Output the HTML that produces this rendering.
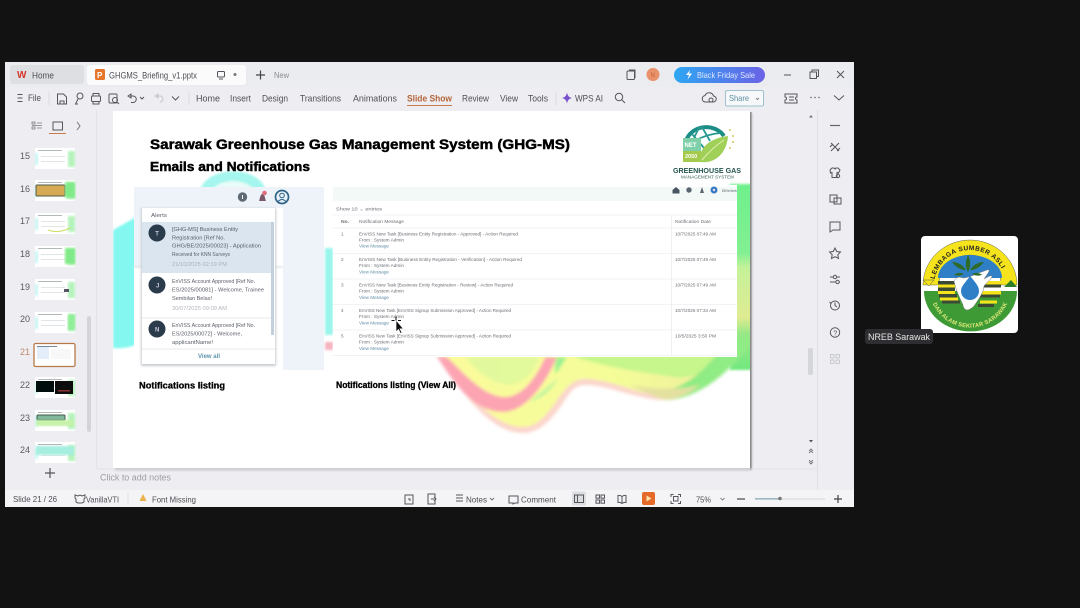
<!DOCTYPE html>
<html><head><meta charset="utf-8"><style>
html,body{margin:0;padding:0;background:#121212;width:1080px;height:608px;overflow:hidden}
svg{display:block}
text{font-family:"Liberation Sans",sans-serif}
.ui{font-size:9.5px;fill:#4e4f55}
.ic{fill:none;stroke:#55565c;stroke-width:1}
.m{font-size:4.6px;fill:#6c6e75}
.l{font-size:5.6px;fill:#5a5f68}
.b{font-weight:bold;fill:#000}
</style></head><body>
<svg width="1080" height="608" viewBox="0 0 1080 608" xmlns="http://www.w3.org/2000/svg">
<defs>
<filter id="all" x="0" y="0" width="100%" height="100%"><feGaussianBlur stdDeviation="0.3"/></filter>
<filter id="b1"><feGaussianBlur stdDeviation="1"/></filter>
<filter id="b15"><feGaussianBlur stdDeviation="1.5"/></filter>
<linearGradient id="pill" x1="0" x2="1"><stop offset="0" stop-color="#2ea6f2"/><stop offset="1" stop-color="#6a62e6"/></linearGradient>
<linearGradient id="yg" x1="0" x2="1"><stop offset="0" stop-color="#fbfb9c"/><stop offset=".55" stop-color="#f4fd98"/><stop offset="1" stop-color="#f0e8a0"/></linearGradient>
<linearGradient id="gr" x1="0" x2="0" y1="0" y2="1">
<stop offset="0" stop-color="#6ff08c"/><stop offset=".37" stop-color="#82f092"/><stop offset=".45" stop-color="#c5f29a"/><stop offset=".72" stop-color="#dfeb92"/><stop offset=".8" stop-color="#9ae888"/><stop offset="1" stop-color="#72e87e"/>
</linearGradient>
<path id="arcT" d="M934 286A36 36 0 0 1 1006 286"/>
<path id="arcB" d="M932 302A41 41 0 0 0 1008 302"/>
<g id="th"><rect x="0" y="0" width="40" height="21" fill="#fff"/><rect x="33" y="3" width="7" height="16" fill="#b5f2bc" filter="url(#b1)"/><rect x="0" y="5" width="3" height="12" fill="#c5f4f2" filter="url(#b1)"/><rect x="3" y="2" width="24" height="1" fill="#b0b8b8"/><rect x="6" y="8" width="24" height="1" fill="#e2e5e8"/><rect x="6" y="13" width="24" height="1" fill="#e2e5e8"/></g>
</defs>
<rect width="1080" height="608" fill="#121212"/>
<g filter="url(#all)">
<!-- window -->
<rect x="5" y="62" width="849" height="445" fill="#eeeef2"/>
<rect x="5" y="62" width="849" height="25" fill="#ebecf0"/>
<rect x="10" y="65" width="74" height="19" rx="3" fill="#dedfe3"/>
<rect x="87" y="65" width="159" height="20" rx="3" fill="#fbfbfc"/>
<text x="17" y="78" font-size="10" font-weight="bold" fill="#d8362c">W</text>
<text x="32" y="78.5" class="ui" textLength="22" lengthAdjust="spacingAndGlyphs">Home</text>
<rect x="95" y="69" width="10" height="11" rx="1.5" fill="#e8762c"/>
<text x="97" y="78" font-size="8" fill="#fff" font-weight="bold">P</text>
<text x="109" y="78.5" class="ui" textLength="88" lengthAdjust="spacingAndGlyphs">GHGMS_Briefing_v1.pptx</text>
<rect x="217.5" y="71.5" width="7" height="5.5" rx="1" class="ic"/><path d="M219 79h4" class="ic"/>
<circle cx="235" cy="74.5" r="1.5" fill="#777"/>
<path d="M256 75h9M260.5 70.5v9" stroke="#444" stroke-width="1.2"/>
<text x="274" y="78" font-size="8" fill="#8a8b90" textLength="15" lengthAdjust="spacingAndGlyphs">New</text>
<rect x="627" y="71" width="7.5" height="8.5" rx="1" class="ic"/><path d="M629 70h6v8" class="ic"/>
<circle cx="653" cy="74.5" r="6.5" fill="#e8916a"/>
<text x="650.5" y="77" font-size="6" fill="#c9633d">N</text>
<rect x="674" y="67" width="91" height="16" rx="8" fill="url(#pill)"/>
<path d="M690 70l-4 5h3l-1.5 4.500 4.500-6h-3z" fill="#fff"/>
<text x="697" y="78" font-size="8.5" fill="#dfe6ff" textLength="58" lengthAdjust="spacingAndGlyphs">Black Friday Sale</text>
<path d="M784 75h7" stroke="#555" stroke-width="1"/>
<rect x="810" y="72" width="6.5" height="6.5" class="ic"/><path d="M812 72v-2h6.500v6.500h-2" class="ic"/>
<path d="M837 71l7 7M844 71l-7 7" class="ic"/>

<!-- menu bar -->
<path d="M17.5 94.5h5M17.5 98h5M17.5 101.5h5" class="ic"/>
<text x="28" y="101" class="ui" textLength="13" lengthAdjust="spacingAndGlyphs">File</text>
<path d="M49 92v13" stroke="#dcdce0"/>
<path d="M57.5 94h6l3 3v7h-9zM60 104v-3h4v3" class="ic"/>
<circle cx="80" cy="96" r="3" class="ic"/><path d="M78 99l-2.500 5h2.500" class="ic"/>
<rect x="91.5" y="96" width="9" height="5.5" rx="1" class="ic"/><path d="M93 96v-2.500h6V96M93 101v3h6v-3" class="ic"/>
<rect x="109" y="94" width="8" height="9" rx="1" class="ic"/><circle cx="115" cy="100" r="2.5" class="ic"/><path d="M117 102l2 2" class="ic"/>
<path d="M128 96l3-2v4zM130 96h3a3 3 0 0 1 0 6.500h-2" class="ic"/><path d="M140 97l2 2 2-2" class="ic"/>
<path d="M155 96l3-2v4zM157 96h3a3 3 0 0 1 0 6" fill="none" stroke="#c5c6ca"/>
<path d="M172 96.5l3.500 3.500 3.500-3.500" class="ic"/>
<path d="M189 92v13" stroke="#dcdce0"/>
<g class="ui">
<text x="196" y="101.5" textLength="24" lengthAdjust="spacingAndGlyphs">Home</text>
<text x="230" y="101.5" textLength="21" lengthAdjust="spacingAndGlyphs">Insert</text>
<text x="262" y="101.5" textLength="26" lengthAdjust="spacingAndGlyphs">Design</text>
<text x="300" y="101.5" textLength="41" lengthAdjust="spacingAndGlyphs">Transitions</text>
<text x="353" y="101.5" textLength="44" lengthAdjust="spacingAndGlyphs">Animations</text>
<text x="462" y="101.5" textLength="27" lengthAdjust="spacingAndGlyphs">Review</text>
<text x="500" y="101.5" textLength="18" lengthAdjust="spacingAndGlyphs">View</text>
<text x="528" y="101.5" textLength="20" lengthAdjust="spacingAndGlyphs">Tools</text>
<text x="575" y="101.5" textLength="28" lengthAdjust="spacingAndGlyphs">WPS AI</text>
</g>
<text x="407" y="101.5" font-size="9.5" font-weight="bold" fill="#b5653a" textLength="45" lengthAdjust="spacingAndGlyphs">Slide Show</text>
<rect x="407" y="105" width="45" height="1" fill="#c87a4e"/>
<path d="M556 92v13" stroke="#dcdce0"/>
<path d="M567 92.5c.8 3.500 1.700 4.500 5 5.500-3.300 1-4.200 2-5 5.500-.8-3.500-1.700-4.500-5-5.500 3.300-1 4.200-2 5-5.500z" fill="#7a4fd0"/>
<circle cx="619" cy="97" r="3.7" class="ic"/><path d="M622 100l3 3" class="ic"/>
<path d="M705 102h8a3 3 0 0 0 .5-6 4.500 4.500 0 0 0-8.500-.5 3.300 3.300 0 0 0 0 6.500z" class="ic"/><circle cx="711" cy="100" r="2" fill="#eeeef2" stroke="#55565c"/>
<rect x="725.5" y="90.5" width="38" height="15.5" rx="1.5" fill="#f6f8fa" stroke="#9fc0cc"/>
<text x="729" y="101" font-size="8.5" fill="#5b8ea3" textLength="20" lengthAdjust="spacingAndGlyphs">Share</text>
<path d="M756 98l1.500 1.500 1.500-1.500" stroke="#888" fill="none"/>
<path d="M785 94h12v3a1.500 1.500 0 0 0 0 3v3h-12v-3a1.500 1.500 0 0 0 0-3z" class="ic"/><path d="M789 97h5M789 100h5" class="ic"/>
<circle cx="811" cy="97.5" r=".7" fill="#555"/><circle cx="815" cy="97.5" r=".7" fill="#555"/><circle cx="819" cy="97.5" r=".7" fill="#555"/>
<path d="M834 95.5l5 4.500 5-4.500" class="ic"/>

<!-- left pane -->
<path d="M32 122h3v2h-3zM32 127h3v2h-3zM37 123h5M37 128h5M32 125.5h10" stroke="#7a7b80" fill="none" stroke-width=".8"/>
<rect x="53" y="122" width="9.5" height="8" class="ic"/>
<rect x="49" y="133" width="17" height="1" fill="#c87a4e"/>
<path d="M77 122l3 4-3 4" stroke="#777" fill="none"/>
<path d="M96.5 110v358" stroke="#e4e4e8"/>
<g font-size="9" fill="#5a5b60">
<text x="20" y="159">15</text><text x="20" y="192">16</text><text x="20" y="224">17</text><text x="20" y="257">18</text><text x="20" y="290">19</text><text x="20" y="322">20</text><text x="20" y="355" fill="#c0876a">21</text><text x="20" y="388">22</text><text x="20" y="421">23</text><text x="20" y="453">24</text>
</g>
<use href="#th" x="35" y="148"/>
<use href="#th" x="35" y="180"/><rect x="36" y="185" width="29" height="11" rx="1" fill="#d6aa55" stroke="#4f5a45"/><rect x="65" y="182" width="10" height="16" fill="#80ea88" filter="url(#b1)"/>
<use href="#th" x="35" y="213"/><path d="M48 230q10 4 22-2" stroke="#cddc60" fill="none"/>
<use href="#th" x="35" y="246"/><rect x="65" y="248" width="10" height="16" fill="#80ea88" filter="url(#b1)"/>
<use href="#th" x="35" y="279"/><rect x="64" y="289" width="5" height="3" fill="#556"/>
<use href="#th" x="35" y="312"/><rect x="68" y="314" width="7" height="16" fill="#90ee98" filter="url(#b1)"/>
<rect x="34" y="343.5" width="41" height="23" rx="1.5" fill="#fff" stroke="#b8794a" stroke-width="1.3"/>
<rect x="37" y="347" width="12" height="12" fill="#e4eefa"/><rect x="37" y="346" width="20" height="1" fill="#789"/><rect x="51" y="349" width="20" height="10" fill="#f8f8f8"/>
<use href="#th" x="35" y="377"/><rect x="36" y="381" width="18" height="11" fill="#060e10"/><rect x="55" y="381" width="18" height="13" fill="#0a0808"/><rect x="58" y="390" width="12" height="1.5" fill="#8a3030"/>
<use href="#th" x="35" y="410"/><rect x="37" y="415" width="28" height="5" rx="1" fill="#7fb89a" stroke="#3f5a4a"/><rect x="36" y="420" width="38" height="6" fill="#c5f2a8" filter="url(#b1)"/>
<use href="#th" x="35" y="442"/><rect x="36" y="446" width="38" height="9" fill="#a5eee0" filter="url(#b1)"/>
<rect x="87" y="316" width="4" height="116" rx="2" fill="#d3d4d8"/>
<path d="M45 473h10M50 468v10" stroke="#555" stroke-width="1.2"/>

<!-- slide -->
<rect x="115" y="113" width="637" height="357" fill="#8a8a8a" opacity=".6" filter="url(#b1)"/>
<rect x="113" y="111" width="637" height="357" fill="#fff"/>
<clipPath id="cl"><rect x="113" y="111" width="637" height="357"/></clipPath>
<g clip-path="url(#cl)">
<!-- cyan shapes -->
<g filter="url(#b1)">
<path d="M113 230L136 217V345Q125 349 113 348z" fill="#84f8f0"/>
<path d="M200 190C208 165 258 165 266 190z" fill="#a5f6ee"/>
<path d="M212 190C220 178 246 178 254 190z" fill="#e8fbf8"/>
<path d="M325 248h8v87h-8z" fill="#9af5ec"/>
<path d="M325 342h8v8h-8z" fill="#f6b4c0"/>
<rect x="730" y="184" width="22" height="186" fill="url(#gr)"/>
</g>
<!-- bottom wave -->
<g filter="url(#b15)">
<path d="M437 357C447 372 456 384 467 397C480 413 500 433 523 433C540 433 553 418 563 403C570 392 575 385 585 385C610 385 640 401 667 400C700 398 730 372 752 342L752 340H437z" fill="#fbd6cc"/>
<path d="M445 357C462 385 490 427 523 427C540 427 550 410 560 396C568 385 575 379 585 379C612 379 640 396 667 396C700 394 728 368 752 340H445z" fill="url(#yg)"/>
<path d="M437 357C450 375 470 412 503 412C525 412 545 385 557 357H545C540 370 525 397 505 397C485 397 465 375 447 357z" fill="#fca4b2"/>
<path d="M465 357C480 375 495 385 510 385C525 383 535 370 540 357z" fill="#dcf89c" opacity=".8"/>
<path d="M530 402C545 397 553 388 558 378C550 385 540 393 530 402z" fill="#bff4a0"/>
<path d="M557 357H567L556 374C554 370 555 362 557 357z" fill="#9cf292"/>
<path d="M575 357C610 368 640 372 680 378C700 376 720 365 735 352H575z" fill="#c6f68c"/>
<path d="M667 400C700 398 730 372 752 342V340H725C715 362 690 385 667 390z" fill="#90ec84"/>
<path d="M630 385C645 392 655 398 667 400C680 398 690 393 700 385C680 390 655 390 630 385z" fill="#e4e0a0"/>
</g>
</g>
<rect x="750" y="112" width="1.5" height="358" fill="#8b8b8b"/>

<text x="150" y="149" font-size="14" class="b" stroke="#000" stroke-width=".45" textLength="420" lengthAdjust="spacingAndGlyphs">Sarawak Greenhouse Gas Management System (GHG-MS)</text>
<text x="150" y="171" font-size="12.5" class="b" stroke="#000" stroke-width=".45" textLength="160" lengthAdjust="spacingAndGlyphs">Emails and Notifications</text>

<!-- GHG logo -->
<path d="M686 141a21 19 0 0 1 38-5" fill="none" stroke="#1f8d86" stroke-width="4"/>
<path d="M692 134l12 14M702 127l8 14M688 145q14-10 32-12M700 127q-6 8-8 20" stroke="#2a9a90" stroke-width="1.8" fill="none"/>
<rect x="683" y="138" width="18" height="24" fill="#7fd0a8"/>
<rect x="683" y="151" width="18" height="11" fill="#a5c94e"/>
<text x="684.5" y="147" font-size="6" fill="#fff" font-weight="bold">NET</text>
<text x="685" y="158" font-size="5.5" fill="#fff" font-weight="bold">2050</text>
<path d="M700 162c-2-14 10-24 28-26-1 16-12 28-28 26z" fill="#a0d058"/>
<path d="M702 160q10-12 22-20" stroke="#e0f0b0" fill="none"/>
<circle cx="730" cy="130" r="1" fill="#d5c860"/><circle cx="733" cy="136" r="1" fill="#d5c860"/><circle cx="733" cy="142" r="1" fill="#d5c860"/><circle cx="730" cy="148" r="1" fill="#d5c860"/>
<text x="673" y="173" font-size="7.5" font-weight="bold" fill="#24544e" textLength="68" lengthAdjust="spacingAndGlyphs">GREENHOUSE GAS</text>
<text x="681" y="178.5" font-size="4.5" fill="#3e625c" textLength="53" lengthAdjust="spacingAndGlyphs">MANAGEMENT SYSTEM</text>

<!-- left screenshot -->
<rect x="134" y="187" width="190" height="80" fill="#eef3fa"/>
<rect x="134" y="267" width="149" height="103" fill="#fff"/>
<rect x="283" y="187" width="41" height="183" fill="#eef3fa"/>
<rect x="275" y="208" width="8" height="59" fill="#fff"/>
<rect x="134" y="266" width="149" height="2" fill="#dde1e6" filter="url(#b1)"/>
<rect x="141" y="208" width="135" height="158" fill="#c8ccd2" filter="url(#b1)"/>
<rect x="142" y="208" width="133" height="156" fill="#fff"/>
<circle cx="242.5" cy="197" r="4.7" fill="#5f6a75"/><rect x="242" y="195" width="1" height="4" fill="#eef3fa"/>
<path d="M259 201c1-2 1-7 3.500-7s2.500 5 3.500 7z" fill="#7a5a6a"/><circle cx="264.5" cy="193" r="2.3" fill="#e06b80"/>
<circle cx="282" cy="197" r="6.500" fill="#e8f1f8" stroke="#2f6486" stroke-width="1.7"/><circle cx="282" cy="195.5" r="2.3" fill="none" stroke="#2f6486"/><path d="M278 201.5q4-4 8 0" fill="none" stroke="#2f6486"/>
<text x="151" y="217" class="l" font-size="6" textLength="16" lengthAdjust="spacingAndGlyphs">Alerts</text>
<rect x="142" y="222" width="130" height="51" fill="#dae5f0"/>
<path d="M142 318h130M142 349h133" stroke="#e6e8ec"/>
<rect x="271" y="222" width="3" height="113" fill="#c2cfdc"/>
<circle cx="157" cy="233" r="8.5" fill="#2c3a4c"/><text x="155.3" y="235.5" font-size="6" fill="#ccd" font-weight="bold">T</text>
<circle cx="157" cy="285" r="8.500" fill="#2c3a4c"/><text x="156" y="287.5" font-size="6" fill="#ccd" font-weight="bold">J</text>
<circle cx="157" cy="329" r="8.500" fill="#2c3a4c"/><text x="155" y="331.5" font-size="6" fill="#ccd" font-weight="bold">N</text>
<g class="l">
<text x="172" y="231" textLength="66" lengthAdjust="spacingAndGlyphs">[GHG-MS] Business Entity</text>
<text x="172" y="239.5" textLength="53" lengthAdjust="spacingAndGlyphs">Registration [Ref No.</text>
<text x="172" y="247.5" textLength="89" lengthAdjust="spacingAndGlyphs">GHG/BE/2025/00023] - Application</text>
<text x="172" y="256" textLength="58" lengthAdjust="spacingAndGlyphs">Received for KNN Surveys</text>
<text x="172" y="283" textLength="83" lengthAdjust="spacingAndGlyphs">EnVISS Account Approved [Ref No.</text>
<text x="172" y="291.5" textLength="92" lengthAdjust="spacingAndGlyphs">ES/2025/00081] - Welcome, Trainee</text>
<text x="172" y="300" textLength="40" lengthAdjust="spacingAndGlyphs">Sembilan Belas!</text>
<text x="172" y="327" textLength="83" lengthAdjust="spacingAndGlyphs">EnVISS Account Approved [Ref No.</text>
<text x="172" y="335.5" textLength="70" lengthAdjust="spacingAndGlyphs">ES/2025/00072] - Welcome,</text>
<text x="172" y="344" textLength="41" lengthAdjust="spacingAndGlyphs">applicantName!</text>
</g>
<text x="172" y="266" font-size="5.4" fill="#a8b2bc" textLength="55" lengthAdjust="spacingAndGlyphs">21/10/2025 02:19 PM</text>
<text x="172" y="310" font-size="5.4" fill="#b2b6bc" textLength="55" lengthAdjust="spacingAndGlyphs">30/07/2025 09:09 AM</text>
<text x="198" y="358" font-size="6.5" font-weight="bold" fill="#5e94ae" textLength="22" lengthAdjust="spacingAndGlyphs">View all</text>
<text x="139" y="388.5" font-size="9" class="b" stroke="#000" stroke-width=".3" textLength="86" lengthAdjust="spacingAndGlyphs">Notifications listing</text>
<text x="336" y="388" font-size="9" class="b" stroke="#000" stroke-width=".3" textLength="120" lengthAdjust="spacingAndGlyphs">Notifications listing (View All)</text>

<!-- right screenshot -->
<rect x="333" y="185" width="404" height="172" fill="#fff"/>
<rect x="333" y="187" width="404" height="14" fill="#f2f9f6"/>
<path d="M672.5 190l3.500-3 3.500 3v3.500h-7z" fill="#4a5560"/>
<circle cx="689" cy="190" r="2.7" fill="#5a6570"/>
<path d="M700 193l2-6 2 6z" fill="#5a6570"/>
<circle cx="714" cy="190" r="3.5" fill="#3b78c4"/><circle cx="714" cy="190" r="1.2" fill="#dce8f5"/>
<text x="722" y="192" font-size="4" fill="#6a7078" textLength="15" lengthAdjust="spacingAndGlyphs">Bfintek</text>
<text x="336" y="210.5" class="m" textLength="46" lengthAdjust="spacingAndGlyphs">Show  10  ⌄  entries</text>
<path d="M333 215h404M333 228h404M333 253.5h404M333 279h404M333 304.5h404M333 330h404M333 355.5h404" stroke="#eef0f2" stroke-width=".8"/>
<path d="M671.5 215v140" stroke="#eef0f2"/>
<text x="341" y="223" class="m" textLength="8" lengthAdjust="spacingAndGlyphs" font-weight="bold">No.</text>
<text x="359" y="223" class="m" textLength="45" lengthAdjust="spacingAndGlyphs" fill="#444">Notification Message</text>
<text x="675" y="223" class="m" textLength="36" lengthAdjust="spacingAndGlyphs" fill="#444">Notification Date</text>
<g class="m">
<text x="341" y="235.5">1</text><text x="341" y="261">2</text><text x="341" y="286.5">3</text><text x="341" y="312">4</text><text x="341" y="337.5">5</text>
<text x="359" y="235.5" textLength="159" lengthAdjust="spacingAndGlyphs">EnVISS New Task [Business Entity Registration - Approved] - Action Required</text>
<text x="359" y="241.5" textLength="45" lengthAdjust="spacingAndGlyphs">From : System Admin</text>
<text x="359" y="261" textLength="163" lengthAdjust="spacingAndGlyphs">EnVISS New Task [Business Entity Registration - Verification] - Action Required</text>
<text x="359" y="267" textLength="45" lengthAdjust="spacingAndGlyphs">From : System Admin</text>
<text x="359" y="286.5" textLength="154" lengthAdjust="spacingAndGlyphs">EnVISS New Task [Business Entity Registration - Review] - Action Required</text>
<text x="359" y="292.5" textLength="45" lengthAdjust="spacingAndGlyphs">From : System Admin</text>
<text x="359" y="312" textLength="152" lengthAdjust="spacingAndGlyphs">EnVISS New Task [EnVISS Signup Submission Approved] - Action Required</text>
<text x="359" y="318" textLength="45" lengthAdjust="spacingAndGlyphs">From : System Admin</text>
<text x="359" y="337.5" textLength="152" lengthAdjust="spacingAndGlyphs">EnVISS New Task [EnVISS Signup Submission Approved] - Action Required</text>
<text x="359" y="343.5" textLength="45" lengthAdjust="spacingAndGlyphs">From : System Admin</text>
<text x="675" y="235.5" textLength="41" lengthAdjust="spacingAndGlyphs">10/7/2025 07:49 AM</text>
<text x="675" y="261" textLength="41" lengthAdjust="spacingAndGlyphs">10/7/2025 07:49 AM</text>
<text x="675" y="286.5" textLength="41" lengthAdjust="spacingAndGlyphs">10/7/2025 07:49 AM</text>
<text x="675" y="312" textLength="41" lengthAdjust="spacingAndGlyphs">10/7/2025 07:34 AM</text>
<text x="675" y="337.5" textLength="41" lengthAdjust="spacingAndGlyphs">10/5/2025 3:50 PM</text>
</g>
<g font-size="4.6" fill="#5e8fa8">
<text x="359" y="247.5" textLength="30" lengthAdjust="spacingAndGlyphs">View Message</text>
<text x="359" y="273.5" textLength="30" lengthAdjust="spacingAndGlyphs">View Message</text>
<text x="359" y="299" textLength="30" lengthAdjust="spacingAndGlyphs">View Message</text>
<text x="359" y="324.5" textLength="30" lengthAdjust="spacingAndGlyphs">View Message</text>
<text x="359" y="350" textLength="30" lengthAdjust="spacingAndGlyphs">View Message</text>
</g>
<!-- cursor -->
<path d="M396 320v12l2.500-2.500 2 4 1.500-.8-2-3.800h3.500z" fill="#111" stroke="#fff" stroke-width=".7"/>
<path d="M396 316.5v4M391.5 320.5h3M398 320.5h3" stroke="#111" stroke-width="1"/>

<!-- right rail -->
<path d="M811 115l-1.800 2.500h3.600z" fill="#666"/>
<rect x="808" y="348" width="5" height="27" rx="2" fill="#d5d6da"/>
<path d="M809 440h4l-2 2.500z" fill="#555"/><path d="M809 451l2-2 2 2M809 453l2-2 2 2" stroke="#666" fill="none" stroke-width=".8"/><path d="M809 460l2 2 2-2M809 462l2 2 2-2" stroke="#666" fill="none" stroke-width=".8"/>
<path d="M817.5 110v380" stroke="#dfdfe4"/>
<path d="M830 125.5h10" stroke="#666" stroke-width="1.2"/>
<path d="M831 143l8 8M839 143l-8 8M830 147l3-3M837 151l3-3" class="ic"/>
<path d="M830 170l2-2h2q1 2 2 0h2l2 2-1.500 3-1.500-.5v5h-5v-5l-1.500.5z" class="ic"/><circle cx="838" cy="176" r="1.7" class="ic"/>
<rect x="830" y="195" width="7" height="7" class="ic"/><rect x="834" y="198" width="7" height="6" class="ic" fill="#eeeef2"/>
<path d="M830 222h10v8h-7l-3 2z" class="ic"/>
<path d="M835 248l1.700 3.500 3.800.5-2.700 2.700.7 3.800-3.500-1.800-3.500 1.800.7-3.800-2.700-2.700 3.800-.5z" class="ic"/>
<path d="M830 277h3M837 277h3M830 282h6M839 282h1" class="ic"/><circle cx="835" cy="277" r="1.7" class="ic"/><circle cx="837.5" cy="282" r="1.7" class="ic"/>
<circle cx="835" cy="305.5" r="4.5" class="ic"/><path d="M835 302.5v3l2 1.500M829.500 302l1.500 1.500" class="ic"/>
<circle cx="835" cy="332.5" r="4.7" class="ic"/><text x="833.3" y="335.3" font-size="7" fill="#555">?</text>
<g fill="none" stroke="#c7c8cc"><rect x="830.5" y="354.5" width="3.5" height="3.5" rx=".5"/><rect x="836" y="354.5" width="3.5" height="3.5" rx=".5"/><rect x="830.5" y="360" width="3.5" height="3.5" rx=".5"/><rect x="836" y="360" width="3.5" height="3.5" rx=".5"/></g>

<!-- notes -->
<path d="M97 469h720" stroke="#e2e2e6"/>
<text x="100" y="480.5" font-size="9" fill="#9d9ea2" textLength="71" lengthAdjust="spacingAndGlyphs">Click to add notes</text>

<!-- status -->
<rect x="5" y="490" width="849" height="17" fill="#f4f4f6"/>
<g font-size="8.5" fill="#4e4f55">
<text x="13" y="502" textLength="44" lengthAdjust="spacingAndGlyphs">Slide 21 / 26</text>
<text x="86" y="502.5" textLength="33" lengthAdjust="spacingAndGlyphs">VanillaVTI</text>
<text x="152" y="502.5" textLength="44" lengthAdjust="spacingAndGlyphs">Font Missing</text>
<text x="466" y="502.5" textLength="21" lengthAdjust="spacingAndGlyphs">Notes</text>
<text x="521" y="502.5" textLength="35" lengthAdjust="spacingAndGlyphs">Comment</text>
<text x="696" y="502.5" textLength="15" lengthAdjust="spacingAndGlyphs">75%</text>
</g>
<path d="M75 495l3 1 2-1 2 1 3-1v3l-1 1v3l-2 1h-4l-2-1v-3l-1-1z" class="ic"/>
<path d="M128 492v13" stroke="#e8e0e0"/>
<path d="M143 494l3.500 7h-7z" fill="#eab04a"/>
<rect x="405" y="495" width="8" height="9" class="ic"/><path d="M408 499h2v2" class="ic"/>
<rect x="428" y="494" width="7" height="10" class="ic"/><path d="M431 499h3M434 497l2 2-2 2" class="ic"/>
<path d="M456 495h7M456 498h7M456 501h7" class="ic"/><path d="M490 498l2 2 2-2" stroke="#777" fill="none"/>
<path d="M509 496h9v7h-3l-2 1v-1h-4z" class="ic"/>
<rect x="572" y="491.5" width="14" height="14" rx="1.5" fill="#dddee2"/>
<rect x="574.5" y="495" width="9" height="7.5" class="ic"/><path d="M577.5 495v7.500" class="ic"/>
<rect x="596" y="495" width="3.5" height="3.2" class="ic"/><rect x="601" y="495" width="3.5" height="3.2" class="ic"/><rect x="596" y="500" width="3.5" height="3.2" class="ic"/><rect x="601" y="500" width="3.5" height="3.2" class="ic"/>
<path d="M622 496.5q-2-1.500-4-1v7q2-.5 4 1 2-1.500 4-1v-7q-2-.5-4 1zv7" class="ic"/>
<rect x="642" y="492" width="13" height="13" rx="2" fill="#e56a2a"/><path d="M646.5 495.5l5 3-5 3z" fill="#f9e5a8"/>
<path d="M671 497v-2.500h2.500M678 494.5h2.500v2.500M680.500 501v2.500H678M673.500 503.500H671V501" class="ic"/><rect x="673.5" y="496.5" width="4.5" height="4.5" class="ic"/>
<path d="M720.5 498l2 2 2-2" fill="none" stroke="#888"/>
<path d="M737 499h8" stroke="#555" stroke-width="1.3"/>
<rect x="755" y="498.5" width="70" height="1" fill="#d5d6da"/><rect x="755" y="498.2" width="25" height="1.3" fill="#8aaab8"/><circle cx="780" cy="498.5" r="1.8" fill="#777"/>
<path d="M834 499h8M838 495v8" stroke="#444" stroke-width="1.2"/>

<!-- participant tile -->
<rect x="921" y="236" width="97" height="97" rx="4" fill="#fff"/>
<path d="M923 285a47 45 0 0 1 94 0h-16a31 30 0 0 0-62 0z" fill="#f5e41e" stroke="#444" stroke-width=".4"/>
<path d="M938 278a32 23 0 0 1 64 0z" fill="#2f7fc6"/>
<path d="M924 291h93a46 40 0 0 1-93 0z" fill="#3e9a34"/>
<path d="M923 280h11l-5 6z" fill="#f5e41e" stroke="#555" stroke-width=".5"/>
<path d="M1017 287h-13l7-7z" fill="#2d7f2a"/>
<rect x="938" y="281" width="17" height="3.5" fill="#3b4a36"/><rect x="938" y="284.5" width="17" height="3" fill="#f5e41e"/><rect x="938" y="287.5" width="17" height="3.5" fill="#3b4a36"/><rect x="938" y="291" width="17" height="3" fill="#f5e41e"/><rect x="939" y="294" width="18" height="3.5" fill="#3b4a36"/><rect x="940" y="297.5" width="18" height="3" fill="#f5e41e"/><rect x="942" y="300.5" width="18" height="3" fill="#3b4a36"/>
<rect x="980" y="281" width="21" height="3.5" fill="#f5e41e"/><rect x="980" y="284.5" width="21" height="3" fill="#3b4a36"/><rect x="982" y="291" width="19" height="3.5" fill="#f5e41e"/><rect x="980" y="294.5" width="20" height="3" fill="#3b4a36"/><rect x="980" y="300.5" width="17" height="3" fill="#f5e41e"/><rect x="978" y="304" width="16" height="3" fill="#3b4a36"/>
<path d="M954 281c4-6 7-3 10-3 6-1 10-3 14-5 5-1 10-4 11-3s-3 6-5 9c2-1 6-4 8-3 0 3-6 7-8 10 0 6-6 14-10 20-2 2-5 4-7 4s-4-3-4-5c-3-7-7-14-9-24z" fill="#fff" stroke="#777" stroke-width=".5"/>
<path d="M970 276c5 6 9 10 9 15a9 9 0 0 1-18 0c0-5 5-9 9-15z" fill="#2f7fc6"/>
<g fill="#2f6b2c">
<path d="M968 272c-3-5-3-10 0-17 3 6 3 12 0 17z"/>
<path d="M966 270c-6 0-10-3-14-8 6 0 11 3 14 8z"/>
<path d="M970 270c6 0 10-3 14-8-6 0-11 3-14 8z"/>
<path d="M964 274c-3 2-6 2-10 1 2-2 6-3 10-1z"/>
<path d="M972 274c3 2 6 2 10 1-2-2-6-3-10-1z"/>
</g>
<text font-size="6.5" font-weight="bold" fill="#222" letter-spacing=".5"><textPath href="#arcT" startOffset="6%">LEMBAGA SUMBER ASLI</textPath></text>
<text font-size="5.8" font-weight="bold" fill="#dfe97a" letter-spacing=".2"><textPath href="#arcB" startOffset="2%">DAN ALAM SEKITAR SARAWAK</textPath></text>
<rect x="865" y="329" width="68" height="15" rx="3" fill="#2e2e30"/>
<text x="868" y="340" font-size="9.5" fill="#e6e6e6" textLength="62" lengthAdjust="spacingAndGlyphs">NREB Sarawak</text>
</g>
</svg>
</body></html>
